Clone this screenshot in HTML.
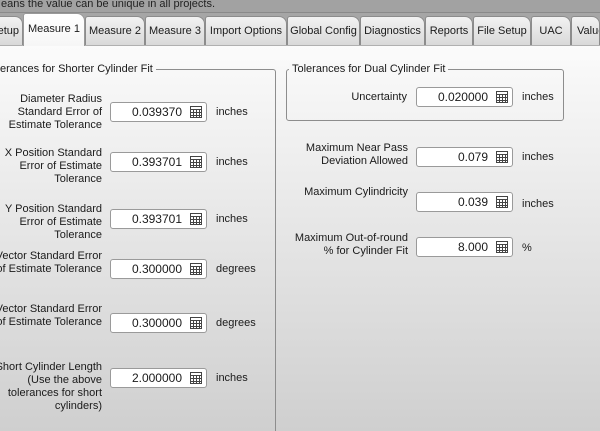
<!DOCTYPE html>
<html><head><style>
*{margin:0;padding:0;box-sizing:border-box}
html,body{width:600px;height:431px;overflow:hidden}
body{position:relative;font-family:"Liberation Sans",Tahoma,sans-serif;font-size:11px;color:#1a1a1a;background:#a9a9a9}
.top{position:absolute;left:0;top:0;width:600px;height:13px;background:#a2a2a2;border-bottom:1px solid #8a8a8a;font-size:11px;line-height:9px;color:#222;overflow:hidden;padding-left:1px}
.strip{position:absolute;left:0;top:13px;width:600px;height:32px;background:#a6a6a6}
.tab{position:absolute;top:16px;height:29px;border:1px solid #8c8c8c;border-bottom:none;border-radius:3px 8px 0 0;background:linear-gradient(#f2f2f2,#d9d9d9);text-align:center;line-height:28px;white-space:nowrap;overflow:hidden}
.tab.act{top:13px;height:33px;background:linear-gradient(#fff,#f6f6f6);line-height:30px;z-index:2;border-color:#999}
.panel{position:absolute;left:0;top:45px;width:600px;height:386px;background:linear-gradient(#fbfbfb,#cfcfcf);border-top:1px solid #b0b0b0;overflow:hidden}
.grp{position:absolute;border:1px solid #8d8d8d;border-radius:3px}
.leg{position:absolute;background:#f8f8f8;padding:0 3px;white-space:nowrap;line-height:12px}
.lbl{position:absolute;text-align:right;line-height:13px;white-space:nowrap}
.inp{position:absolute;width:97px;height:20px;border:1px solid #9a9a9a;border-radius:3px;background:#fff;text-align:right;padding-right:24px;line-height:18px;font-size:12px}
.inp i{position:absolute;right:4px;top:3px;width:12px;height:12px;border:1px solid #444;background:
linear-gradient(#444,#444) 0 2px/100% 1px no-repeat,
repeating-linear-gradient(#fff 0 2px,#444 2px 3px) 0 3px/100% 9px no-repeat,#fff}
.inp i:after{content:"";position:absolute;left:0;top:3px;width:10px;height:8px;background:repeating-linear-gradient(90deg,transparent 0 2px,#444 2px 3px)}
.u{position:absolute;line-height:13px}
</style></head><body>
<div class="top">eans the value can be unique in all projects.</div>
<div class="strip"></div>
<div class="tab" style="left:-6px;width:29px;text-align:right;padding-right:3px">etup</div>
<div class="tab act" style="left:23px;width:62px">Measure 1</div>
<div class="tab" style="left:85px;width:60px">Measure 2</div>
<div class="tab" style="left:145px;width:60px">Measure 3</div>
<div class="tab" style="left:205px;width:82px">Import Options</div>
<div class="tab" style="left:287px;width:73px">Global Config</div>
<div class="tab" style="left:360px;width:65px">Diagnostics</div>
<div class="tab" style="left:425px;width:48px">Reports</div>
<div class="tab" style="left:473px;width:58px">File Setup</div>
<div class="tab" style="left:531px;width:29px;width:40px">UAC</div>
<div class="tab" style="left:571px;width:29px;text-align:left;padding-left:5px">Value</div>
<div class="panel">
<div class="grp" style="left:-5px;top:23px;width:281px;height:362px;border-bottom:none;border-radius:3px 3px 0 0"></div>
</div>
<div class="leg" style="left:0;top:63px;padding-left:0">erances for Shorter Cylinder Fit</div>
<div class="grp" style="left:286px;top:69px;width:278px;height:52px"></div>
<div class="leg" style="left:289px;top:63px">Tolerances for Dual Cylinder Fit</div>

<div class="lbl" style="right:498px;top:93px">Diameter Radius<br>Standard Error of<br>Estimate Tolerance</div>
<div class="inp" style="left:110px;top:102px">0.039370<i></i></div><div class="u" style="left:216px;top:106px">inches</div>

<div class="lbl" style="right:498px;top:147px">X Position Standard<br>Error of Estimate<br>Tolerance</div>
<div class="inp" style="left:110px;top:152px">0.393701<i></i></div><div class="u" style="left:216px;top:156px">inches</div>

<div class="lbl" style="right:498px;top:203px">Y Position Standard<br>Error of Estimate<br>Tolerance</div>
<div class="inp" style="left:110px;top:209px">0.393701<i></i></div><div class="u" style="left:216px;top:213px">inches</div>

<div class="lbl" style="right:498px;top:250px">Vector Standard Error<br>of Estimate Tolerance</div>
<div class="inp" style="left:110px;top:259px">0.300000<i></i></div><div class="u" style="left:216px;top:263px">degrees</div>

<div class="lbl" style="right:498px;top:303px">Vector Standard Error<br>of Estimate Tolerance</div>
<div class="inp" style="left:110px;top:313px">0.300000<i></i></div><div class="u" style="left:216px;top:317px">degrees</div>

<div class="lbl" style="right:498px;top:361px">Short Cylinder Length<br>(Use the above<br>tolerances for short<br>cylinders)</div>
<div class="inp" style="left:110px;top:368px">2.000000<i></i></div><div class="u" style="left:216px;top:372px">inches</div>

<div class="lbl" style="right:193px;top:91px">Uncertainty</div>
<div class="inp" style="left:416px;top:87px">0.020000<i></i></div><div class="u" style="left:522px;top:91px">inches</div>

<div class="lbl" style="right:192px;top:142px">Maximum Near Pass<br>Deviation Allowed</div>
<div class="inp" style="left:416px;top:147px">0.079<i></i></div><div class="u" style="left:522px;top:151px">inches</div>

<div class="lbl" style="right:192px;top:186px">Maximum Cylindricity</div>
<div class="inp" style="left:416px;top:192px">0.039<i></i></div><div class="u" style="left:522px;top:198px">inches</div>

<div class="lbl" style="right:192px;top:232px">Maximum Out-of-round<br>% for Cylinder Fit</div>
<div class="inp" style="left:416px;top:237px">8.000<i></i></div><div class="u" style="left:522px;top:242px">%</div>
</body></html>
